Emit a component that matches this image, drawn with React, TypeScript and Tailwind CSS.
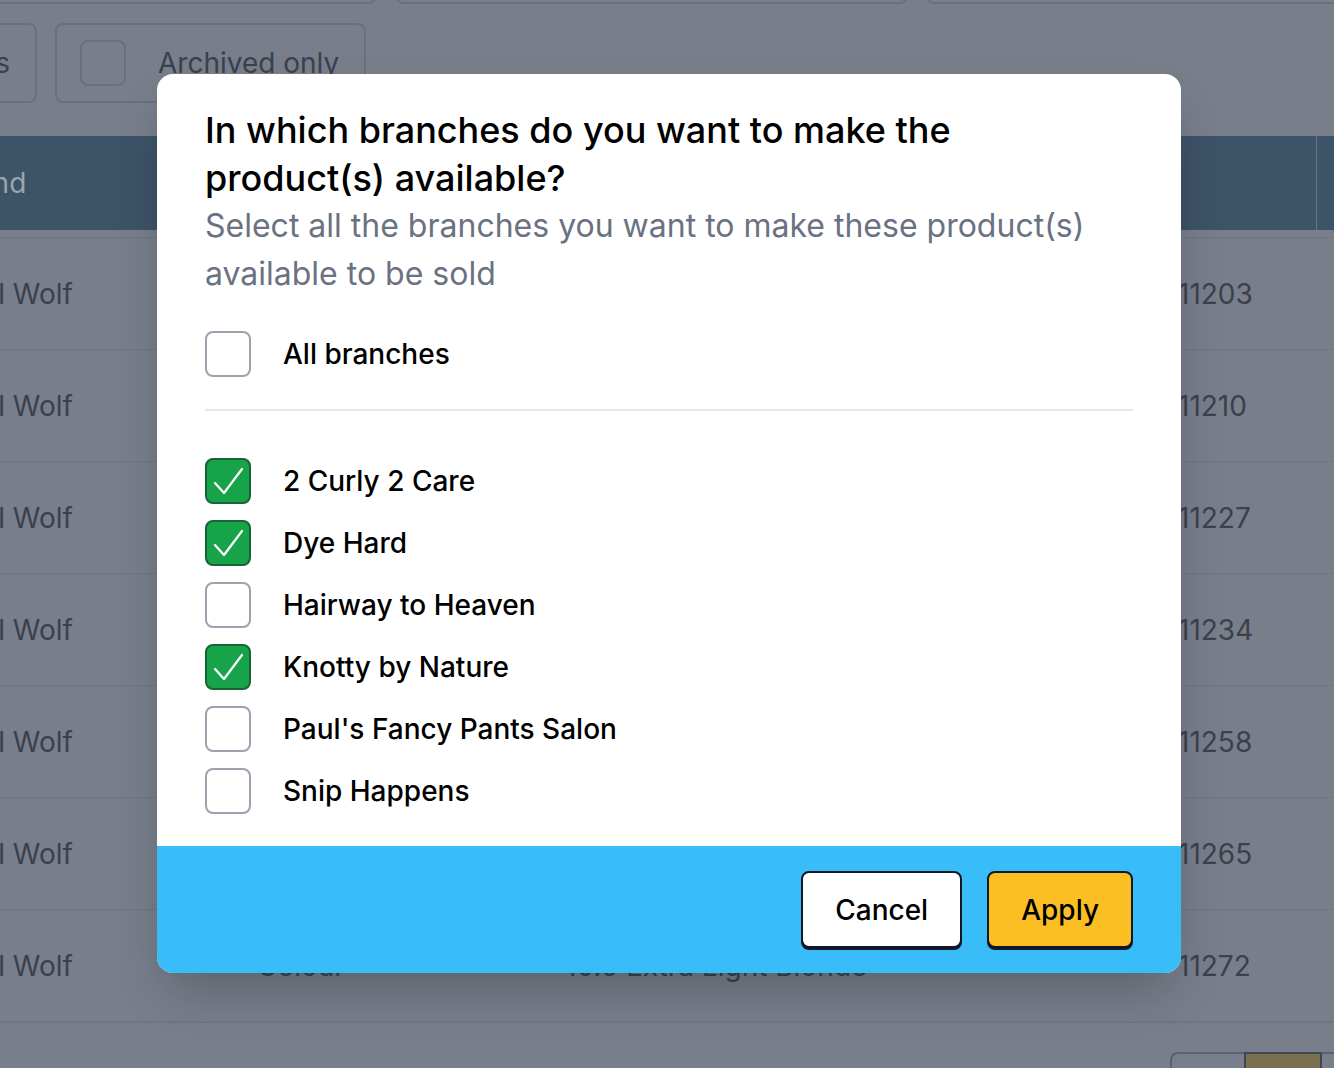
const branches = [
  { name: "2 Curly 2 Care", checked: true },
  { name: "Dye Hard", checked: true },
  { name: "Hairway to Heaven", checked: false },
  { name: "Knotty by Nature", checked: true },
  { name: "Paul's Fancy Pants Salon", checked: false },
  { name: "Snip Happens", checked: false },
]

const rows = ["11203", "11210", "11227", "11234", "11258", "11265", "11272"]

function Checkbox({ checked }: { checked: boolean }) {
  if (checked) {
    return (
      <div className="size-[46px] shrink-0 rounded-lg border-2 border-[#166534] bg-[#16a34a]">
        <svg viewBox="0 0 42 42" className="size-[42px]" fill="none">
          <path d="M8 23 L17 33 L35 9" stroke="white" strokeWidth="2.2" strokeLinecap="round" strokeLinejoin="round" />
        </svg>
      </div>
    )
  }
  return <div className="size-[46px] shrink-0 rounded-lg border-2 border-[#9ca3af] bg-white"></div>
}

function BackgroundPage() {
  return (
    <div className="h-[1068px] w-full overflow-hidden bg-[#787e8a] text-[28px] text-[#3b414c]">
      {/* Search inputs, cut at the top */}
      <div className="-mt-[40px] flex gap-[18px]">
        <div className="-ml-[20px] h-[44px] w-[397px] shrink-0 rounded-lg border-2 border-[#6a707c]"></div>
        <div className="h-[44px] w-[513px] shrink-0 rounded-lg border-2 border-[#6a707c]"></div>
        <div className="h-[44px] w-[500px] shrink-0 rounded-lg border-2 border-[#6a707c]"></div>
      </div>

      {/* Filter toggles */}
      <div className="mt-[19px] flex gap-[18px]">
        <div className="-ml-[100px] flex h-[80px] w-[137px] shrink-0 items-center justify-end rounded-lg border-2 border-[#6a707c] pr-[25px]">
          Drafts
        </div>
        <div className="flex h-[80px] w-[311px] shrink-0 items-center gap-[32px] rounded-lg border-2 border-[#6a707c] pl-[23px]">
          <div className="size-[46px] rounded-lg border-2 border-[#6a707c]"></div>
          <span>Archived only</span>
        </div>
      </div>

      {/* Table */}
      <div className="mt-[33px]">
        <div className="flex h-[94px] items-center bg-[#3d5368] text-[#9ba5b1]">
          <div className="-ml-[52px] w-[314px] shrink-0">Brand</div>
          <div className="w-[308px] shrink-0">Type</div>
          <div className="w-[530px] shrink-0">Name</div>
          <div className="w-[216px] shrink-0">SKU</div>
          <div className="h-full w-px bg-[#6b7585]"></div>
        </div>
        <div className="h-[7px]"></div>
        <div className="border-b-2 border-[#6f7581]">
          {rows.map((sku) => (
            <div key={sku} className="flex h-[112px] items-center border-t border-[#6f7581]">
              <div className="-ml-[52px] w-[309px] shrink-0">Paul Wolf</div>
              <div className="w-[308px] shrink-0">Colour</div>
              <div className="w-[613px] shrink-0">10.5 Extra Light Blonde</div>
              <div className="shrink-0">{sku}</div>
            </div>
          ))}
        </div>
      </div>

      {/* Pagination */}
      <div className="ml-[1170px] mt-[29px] flex">
        <div className="h-[40px] w-[74px] shrink-0 rounded-tl-lg border-2 border-r-0 border-[#5a6170]"></div>
        <div className="h-[40px] w-[78px] shrink-0 border-2 border-[#3e4654] bg-[#78704f]"></div>
        <div className="h-[40px] w-[60px] shrink-0 border-2 border-l-0 border-[#5a6170]"></div>
      </div>
    </div>
  )
}

export default function App() {
  return (
    <div className="relative h-[1068px] w-full overflow-hidden font-['Inter',sans-serif]">
      <BackgroundPage />

      <div className="absolute inset-0 flex items-start justify-center pl-[4px] pt-[74px]">
        <div className="w-[1024px] overflow-hidden rounded-2xl bg-white shadow-2xl">
          <div className="px-12 pb-8 pt-8">
            <h2 className="max-w-[820px] text-[36px] font-medium leading-[48px] text-black">
              In which branches do you want to make the product(s) available?
            </h2>
            <p className="text-[32px] leading-[48px] text-gray-500">
              Select all the branches you want to make these product(s) available to be sold
            </p>

            <div className="mt-[33px] flex items-center gap-[32px]">
              <Checkbox checked={false} />
              <span className="text-[28px] font-medium text-black">All branches</span>
            </div>

            <div className="mt-8 border-t-2 border-gray-200"></div>

            <div className="mt-[47px] flex flex-col gap-4">
              {branches.map((b) => (
                <div key={b.name} className="flex items-center gap-[32px]">
                  <Checkbox checked={b.checked} />
                  <span className="text-[28px] font-medium text-black">{b.name}</span>
                </div>
              ))}
            </div>
          </div>

          <div className="flex justify-end gap-[25px] bg-[#38bdf8] py-[25px] pr-12">
            <button className="h-[77px] rounded-lg border-2 border-gray-900 bg-white px-8 text-[28px] font-medium text-black shadow-[0_2px_0_0_#111827]">
              Cancel
            </button>
            <button className="h-[77px] rounded-lg border-2 border-gray-900 bg-[#fbbf24] px-8 text-[28px] font-medium text-black shadow-[0_2px_0_0_#111827]">
              Apply
            </button>
          </div>
        </div>
      </div>
    </div>
  )
}
